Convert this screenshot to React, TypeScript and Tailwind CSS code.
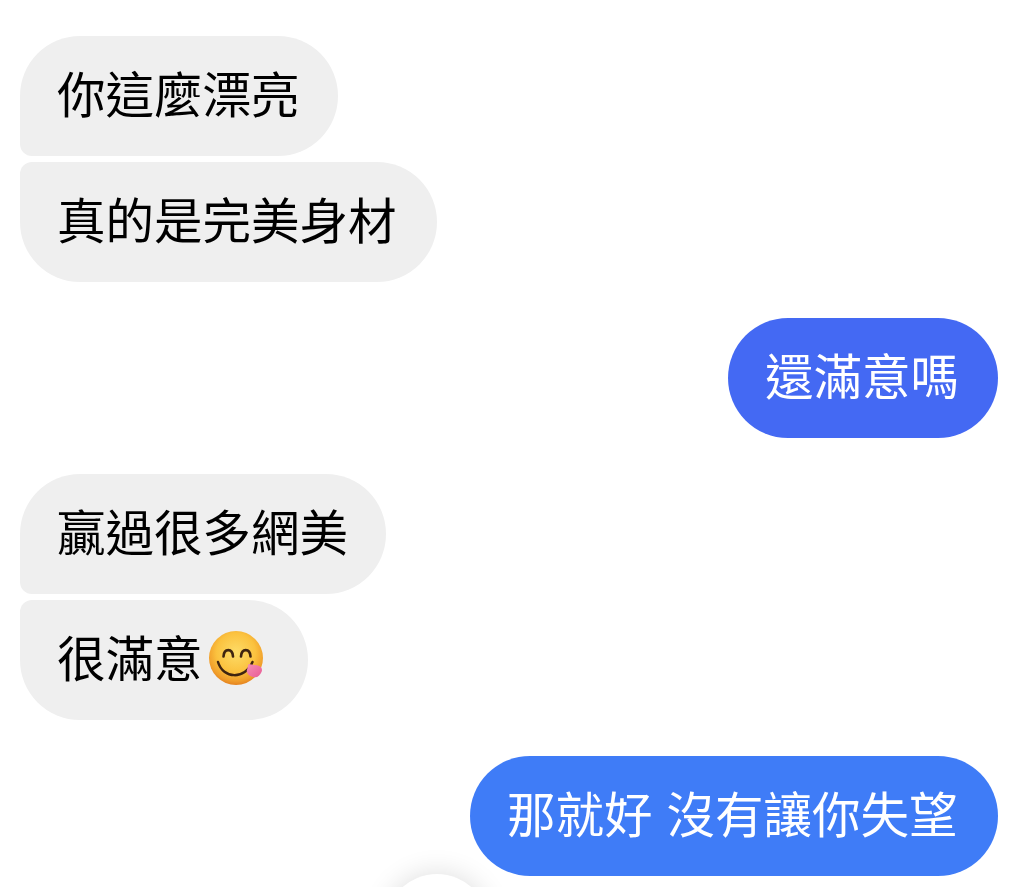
const FONT = "font-['Noto_Sans_CJK_TC','Noto_Sans',sans-serif]";

// Round face with the tongue poking out on the right
function YumEmoji() {
  return (
    <svg viewBox="0 0 54 54" className="ml-[6.5px] mr-[6px] mt-[4px] h-[54px] w-[54px] shrink-0 overflow-visible">
      <defs>
        <radialGradient id="yumFace" cx="50%" cy="40%" r="60%">
          <stop offset="0%" stopColor="#fddc68" />
          <stop offset="60%" stopColor="#fbc23f" />
          <stop offset="88%" stopColor="#f09d2a" />
          <stop offset="100%" stopColor="#e5831f" />
        </radialGradient>
        <linearGradient id="yumTongue" x1="0" y1="0" x2="1" y2="1">
          <stop offset="0%" stopColor="#f68fb4" />
          <stop offset="100%" stopColor="#e85a94" />
        </linearGradient>
      </defs>
      <circle cx="27" cy="27" r="27" fill="url(#yumFace)" />
      <path d="M14.500 25.500c.5-8.500 9-8.500 9.500 0" fill="none" stroke="#3f2410" strokeWidth="2.600" strokeLinecap="round" />
      <path d="M32 25.500c.5-8.500 9-8.500 9.500 0" fill="none" stroke="#3f2410" strokeWidth="2.600" strokeLinecap="round" />
      <path d="M9 31c5 17 27 18 34.500 0" fill="none" stroke="#3f2410" strokeWidth="2.500" strokeLinecap="round" />
      <path d="M39.500 33l9.500 1.500c3.500.8 4.800 3.800 3.500 6.500-1.300 3.200-3.900 5.600-6.800 5.300-4.400-.5-7.600-3-8-6.300z" fill="url(#yumTongue)" />
    </svg>
  );
}

type BubbleProps = {
  side: "left" | "right";
  shape?: string;
  tone?: string;
  spacing?: string;
  children: React.ReactNode;
};

function Bubble({ side, shape, tone, spacing, children }: BubbleProps) {
  return (
    <div
      className={`flex h-[120px] items-center whitespace-nowrap pb-[8px] pl-[37px] text-[48.5px] leading-none ${
        side === "left" ? "self-start bg-[#efefef] text-black" : "self-end text-white"
      } ${shape ?? "rounded-[60px]"} ${tone ?? ""} ${spacing ?? "pr-[39px]"}`}
    >
      {children}
    </div>
  );
}

export default function App() {
  return (
    <div className={`relative h-[887px] w-full overflow-hidden bg-white ${FONT}`}>
      <div className="flex flex-col pb-[11px] pl-[20px] pr-[23px] pt-[36px]">
        <Bubble side="left" shape="rounded-[60px] rounded-bl-[12px]" spacing="pr-[38.500px]">你這麼漂亮</Bubble>
        <Bubble side="left" shape="rounded-[60px] rounded-tl-[12px]" spacing="mt-[6px] pr-[40.500px]">真的是完美身材</Bubble>
        <Bubble side="right" tone="bg-[#4469f3]" spacing="mt-[36px] pr-[39px]">還滿意嗎</Bubble>
        <Bubble side="left" shape="rounded-[60px] rounded-bl-[12px]" spacing="mt-[36px] pr-[38px]">贏過很多網美</Bubble>
        <Bubble side="left" shape="rounded-[60px] rounded-tl-[12px]" spacing="mt-[6px] pr-[39px]">
          很滿意
          <YumEmoji />
        </Bubble>
        <Bubble side="right" tone="bg-[#3f7cf7] [word-spacing:3px]" spacing="mt-[36px] pr-[40.600px]">那就好 沒有讓你失望</Bubble>
      </div>
      {/* scroll-to-bottom button, cut off by the screen edge */}
      <div className="absolute left-[385px] top-[874px] h-[104px] w-[104px] rounded-full bg-white shadow-[0_0_28px_rgba(0,0,0,0.14)]" />
    </div>
  );
}
